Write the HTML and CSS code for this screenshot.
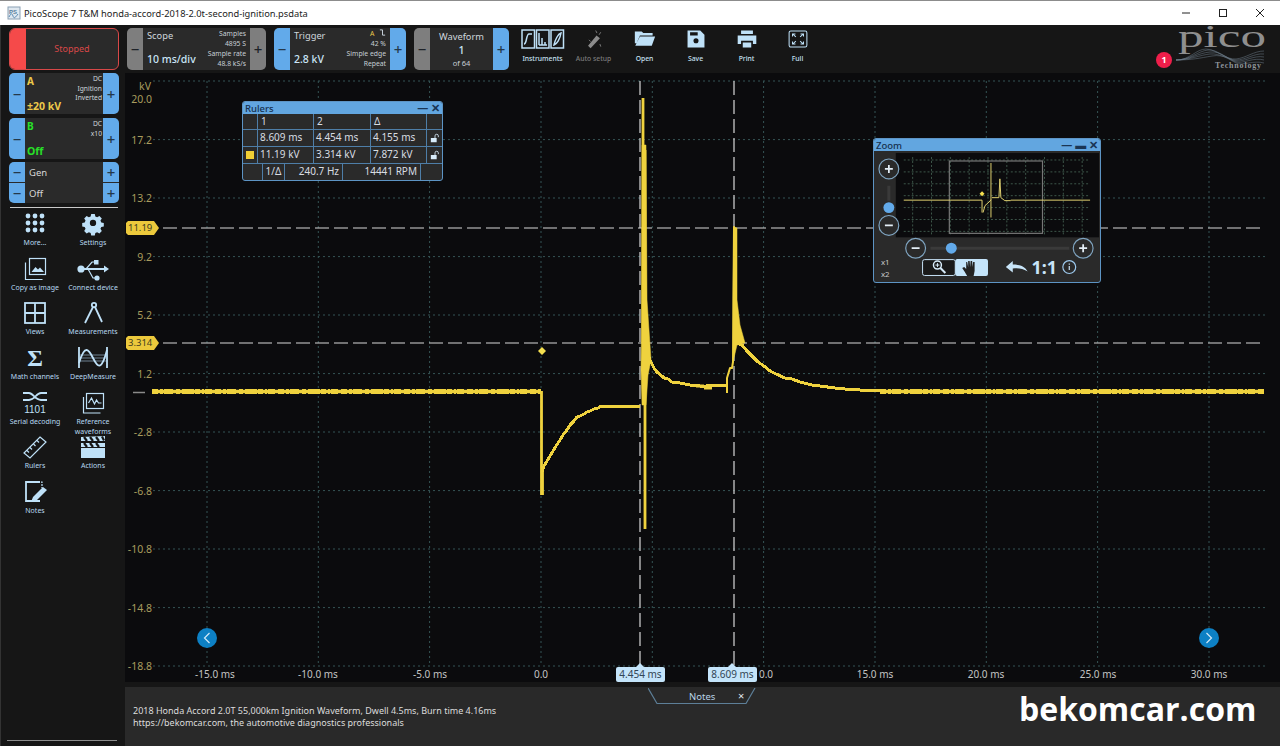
FILE: index.html
```html
<!DOCTYPE html>
<html lang="en">
<head>
<meta charset="utf-8">
<title>PicoScope 7 T&amp;M</title>
<link rel="stylesheet" href="styles.css">
</head>
<body>
<div class="app">
  <header class="titlebar">
    <svg class="app-icon" viewBox="0 0 14 14"><rect x="1" y="1" width="12" height="12" fill="#dfe8f0" stroke="#8aa0b4"/><text x="2" y="7.5" class="app-icon-text">PS</text><path d="M2 11c2-4 3-4 4-1s2 2 5-2" fill="none" stroke="#5a88b0"/></svg>
    <span class="title-text">PicoScope 7 T&amp;M honda-accord-2018-2.0t-second-ignition.psdata</span>
    <div class="win-buttons">
      <svg viewBox="0 0 10 10"><path d="M1 5h8" stroke="#222" fill="none"/></svg>
      <svg viewBox="0 0 10 10"><rect x="1.5" y="1.5" width="7" height="7" stroke="#222" fill="none"/></svg>
      <svg viewBox="0 0 10 10"><path d="M1 1l8 8M9 1l-8 8" stroke="#222" fill="none"/></svg>
    </div>
  </header>
  <div class="workspace">
    <aside class="sidebar">
      <div class="stopped"><span class="stopped-led"></span><span class="stopped-text">Stopped</span></div>
      <div class="channel">
        <button class="step blue">−</button>
        <div class="ch-body">
          <span class="ch-name yellow">A</span>
          <span class="ch-info">DC<br>Ignition<br>Inverted</span>
          <span class="ch-value yellow">±20 kV</span>
        </div>
        <button class="step blue">+</button>
      </div>
      <div class="channel">
        <button class="step blue">−</button>
        <div class="ch-body">
          <span class="ch-name green">B</span>
          <span class="ch-info">DC<br>x10</span>
          <span class="ch-value green">Off</span>
        </div>
        <button class="step blue">+</button>
      </div>
      <div class="gen">
        <div class="gen-row"><button class="step blue">−</button><span class="gen-label">Gen</span><button class="step blue">+</button></div>
        <div class="gen-row"><button class="step blue">−</button><span class="gen-label">Off</span><button class="step blue">+</button></div>
      </div>
      <div class="rule"></div>
      <div class="tools">
        <div class="tool"><svg viewBox="0 0 26 26"><g class="ifill"><circle cx="6" cy="5" r="2.4"/><circle cx="13" cy="5" r="2.4"/><circle cx="20" cy="5" r="2.4"/><circle cx="6" cy="12" r="2.4"/><circle cx="13" cy="12" r="2.4"/><circle cx="20" cy="12" r="2.4"/><circle cx="6" cy="19" r="2.4"/><circle cx="13" cy="19" r="2.4"/><circle cx="20" cy="19" r="2.4"/></g></svg><span>More...</span></div>
        <div class="tool"><svg viewBox="0 0 26 26"><path class="ifill" fill-rule="evenodd" d="M11 3h4l.6 2.8 2 .9 2.5-1.5 2.7 2.8-1.5 2.4.9 2.1 2.8.6v3.8l-2.8.6-.9 2.1 1.5 2.4-2.7 2.8-2.5-1.5-2 .9-.6 2.8h-4l-.6-2.8-2-.9-2.5 1.5-2.7-2.8 1.5-2.4-.9-2.1-2.8-.6v-3.8l2.8-.6.9-2.1-1.5-2.4 2.7-2.8 2.5 1.5 2-.9zM13 9.5a3.5 3.5 0 1 0 0 7 3.5 3.5 0 0 0 0-7z" transform="translate(1.3 .2) scale(.9)"/></svg><span>Settings</span></div>
        <div class="tool"><svg viewBox="0 0 26 26"><g class="istroke"><rect x="7.5" y="2.5" width="16" height="16"/><path d="M3.5 6.5v17h17"/></g><path class="ifill" d="M9.5 16l4-5 2.5 2.5 2-2 4 4.500z"/></svg><span>Copy as image</span></div>
        <div class="tool"><svg viewBox="0 0 34 26"><g class="ifill"><circle cx="5" cy="13" r="3.6"/><path d="M5 12h25v2H5z"/><path d="M28 9.500l5 3.500-5 3.500z"/><rect x="18" y="4" width="4.500" height="4.500"/><circle cx="21" cy="22" r="2.600"/></g><path class="istroke" d="M10 13l6-7h3M12 13l5 9h3"/></svg><span>Connect device</span></div>
        <div class="tool"><svg viewBox="0 0 26 26"><g class="istroke2"><rect x="3" y="3" width="20" height="20"/><path d="M13 3v20M3 13h20"/></g></svg><span>Views</span></div>
        <div class="tool"><svg viewBox="0 0 26 26"><g class="istroke2"><circle cx="14" cy="5" r="2.200"/><path d="M13 7L5 23M15 7l7 15"/></g></svg><span>Measurements</span></div>
        <div class="tool"><svg viewBox="0 0 26 26"><text x="13" y="21" class="sigma">Σ</text></svg><span>Math channels</span></div>
        <div class="tool"><svg viewBox="0 0 32 26"><path d="M3 10h26M3 13h26M3 16h26" stroke="#6d8090" fill="none"/><g class="istroke2"><path d="M2 2v21M30 2v21"/><path d="M2 18C8 -2 12 5 16 13s8 15 14-8"/></g></svg><span>DeepMeasure</span></div>
        <div class="tool"><svg viewBox="0 0 30 26"><path class="istroke2" d="M3 3h6c4 0 6 7 12 7h6M3 10h6c6 0 7-7 12-7h6"/><text x="15" y="23" class="bits">1101</text></svg><span>Serial decoding</span></div>
        <div class="tool"><svg viewBox="0 0 26 26"><g class="istroke"><rect x="6.500" y="3.500" width="17" height="15"/><path d="M3.500 7v16h17"/><path d="M8.500 13l3-5 3 6 2-4 2 3h3"/></g></svg><span>Reference<br>waveforms</span></div>
        <div class="tool"><svg viewBox="0 0 26 26"><g class="istroke"><path d="M18 3l6 5L8 24l-6-5z"/><path d="M15 6.500l2 2M11.500 10l2 2M8 13.500l2 2M5 16.500l2 2"/></g></svg><span>Rulers</span></div>
        <div class="tool"><svg viewBox="0 0 26 26"><path class="ifill" d="M1 9h24v15H1z"/><path class="ifill" d="M1 7V3l24-1v5z"/><path d="M4 3l3 4M10 3l3 4M16 3l3 4M22 2.500l2 4M4 9l3 4M10 9l3 4M16 9l3 4" stroke="#161616" stroke-width="2.200" fill="none"/><path d="M1 13.500h24" stroke="#161616"/></svg><span>Actions</span></div>
        <div class="tool"><svg viewBox="0 0 26 26"><path class="istroke2" d="M18 3H4v19h14"/><path class="istroke" d="M4 3h16v6" stroke-dasharray="2 1"/><path class="ifill" d="M9 23l2-5L21 8l4 3-10 10z"/></svg><span>Notes</span></div>
      </div>
      <div class="rule rule-end"></div>
    </aside>
    <div class="main">
      <div class="toolbar">
        <div class="group scope">
          <button class="step gray">−</button>
          <div class="g-body">
            <div class="g-left"><span class="g-title">Scope</span><span class="g-value">10 ms/div</span></div>
            <div class="g-info">Samples<br>4895 S<br>Sample rate<br>48.8 kS/s</div>
          </div>
          <button class="step gray">+</button>
        </div>
        <div class="group trigger">
          <button class="step blue">−</button>
          <div class="g-body">
            <div class="g-left"><span class="g-title">Trigger</span><span class="g-value">2.8 kV</span></div>
            <div class="g-info"><span class="yellow">A</span> <svg class="edge" viewBox="0 0 8 8"><path d="M1 1h3v6h3" fill="none" stroke="#d8e4ee"/></svg><br>42 %<br>Simple edge<br>Repeat</div>
          </div>
          <button class="step blue">+</button>
        </div>
        <div class="group waveform">
          <button class="step gray">−</button>
          <div class="g-body g-center"><span class="g-title">Waveform</span><span class="g-num">1</span><span class="g-of">of 64</span></div>
          <button class="step blue">+</button>
        </div>
        <div class="tbtn wide"><svg viewBox="0 0 44 22"><g class="istroke3"><rect x="1" y="2" width="12.500" height="18"/><rect x="15.500" y="2" width="12.500" height="18"/><rect x="30" y="2" width="12.500" height="18"/><path d="M3 16c3 0 2-10 5-10h3"/><path d="M18 5v12M21 10v7M24 14v3M18 17h8"/><path d="M33 17c1-5 4-11 7-12-1 6-4 11-7 12z"/></g></svg><span>Instruments</span></div>
        <div class="tbtn dim"><svg viewBox="0 0 26 26"><path d="M6 21L16 9l4 3L9 24z" fill="#8c8c8c"/><path d="M15 3l1.500 3M21 5l-2 3M7 14l2 2M20 19l1 3" stroke="#8c8c8c" fill="none"/></svg><span>Auto setup</span></div>
        <div class="tbtn"><svg viewBox="0 0 26 26"><path class="ifill" d="M1 4h8l2 2h11v3H7L3 18H1zM7 10h18l-4 11H1.500z"/></svg><span>Open</span></div>
        <div class="tbtn"><svg viewBox="0 0 26 26"><path class="ifill" fill-rule="evenodd" d="M3 3h15l5 5v15H3zM6 5v4h9V5zM13 12a3 3 0 1 0 0 6 3 3 0 0 0 0-6z"/></svg><span>Save</span></div>
        <div class="tbtn"><svg viewBox="0 0 26 26"><path class="ifill" fill-rule="evenodd" d="M6 3h14v4H6zM2 9h22v10h-4v-4H6v4H2zM8 17h10v6H8z"/></svg><span>Print</span></div>
        <div class="tbtn"><svg viewBox="0 0 26 26"><rect x="2.500" y="3.500" width="21" height="19" rx="2" class="istroke"/><path class="istroke" d="M6.500 7l4 3.500M19.500 7l-4 3.500M6.500 19l4-3.500M19.500 19l-4-3.500M6.500 10V7H10M19.500 10V7H16M6.500 16v3H10M19.500 16v3H16"/></svg><span>Full</span></div>
        <div class="logo">
          <svg viewBox="1150 28 122 44" class="logo-svg">
            <text x="1178" y="47" class="logo-pico" textLength="88" lengthAdjust="spacingAndGlyphs">pico</text>
            <g fill="none" stroke="#6f7f8c" stroke-width=".5">
              <path d="M1176 60c14 0 20-11 30-11s20 11 30 10 18-8 28-8"/>
              <path d="M1176 60c14 0 22-9 32-10s18 10 28 10 18-7 28-6"/>
              <path d="M1176 60c14 0 22-7 34-8s18 8 26 9 18-6 28-4"/>
              <path d="M1176 60c14 0 24-5 34-6s20 6 26 8 18-5 28-2"/>
              <path d="M1176 60c16 0 24-2 36-4s18 4 24 7 18-3 28 0"/>
            </g>
            <text x="1215" y="68" class="logo-tech" textLength="46">Technology</text>
          </svg>
          <span class="badge">1</span>
        </div>
      </div>
      <div class="stage">
        <svg class="plot" viewBox="125 73 1155 609">
          <g class="grid">
            <path d="M153 81H1265M153 139.600H1265M153 198H1265M153 256.600H1265M153 315H1265M153 373.600H1265M153 432H1265M153 490.600H1265M153 549H1265M153 607.600H1265M153 666H1265"/>
            <path d="M207 81V666M318.300 81V666M429.600 81V666M541 81V666M652.300 81V666M763.600 81V666M875 81V666M986.300 81V666M1097.600 81V666M1209 81V666"/>
          </g>
          <g class="ylab">
            <text x="151" y="90">kV</text><text x="152" y="103">20.0</text><text x="152" y="144">17.2</text><text x="152" y="202">13.2</text><text x="152" y="261">9.2</text><text x="152" y="319">5.2</text><text x="152" y="378">1.2</text><text x="152" y="436">-2.8</text><text x="152" y="495">-6.8</text><text x="152" y="553">-10.8</text><text x="152" y="612">-14.8</text><text x="152" y="670">-18.8</text>
          </g>
          <g class="xlab">
            <text x="215" y="678">-15.0 ms</text><text x="318" y="678">-10.0 ms</text><text x="430" y="678">-5.0 ms</text><text x="541" y="678">0.0</text><text x="766" y="678">0.0</text><text x="875" y="678">15.0 ms</text><text x="986" y="678">20.0 ms</text><text x="1098" y="678">25.0 ms</text><text x="1209" y="678">30.0 ms</text>
          </g>
          <g class="rulers">
            <path d="M640 81V666M734 81V666M163 228H1265M163 343H1265"/>
          </g>
          <path d="M133 392.500H145" stroke="#8a8a8a" stroke-width="1.500" fill="none"/>
          <g class="trace">
            <path class="base" d="M152 391.500H541M880 391.500H1264"/>
            <path class="noise" d="M152 389.500H541M880 389.500H1264"/>
            <path class="noise" d="M152 393.500H541M880 393.500H1264"/>
            <path class="thick" d="M541.500 391V495M542.500 495V466"/>
            <path class="stair" d="M542 472L544 466 547 461 550 456 553 451 556 446 560 440 563 435 567 430 570 425 574 421 577 417 580 416 584 414 587 412 590 411 594 409 598 408 601 406H636L640 407"/>
            <path class="thin" d="M643 98V343M645 150V529"/>
            <path class="mass" d="M641.500 330L642 145 646 145 647 300 650 345 651 360 648 375 646 405 642 405 641 370z"/>
            <path class="stair" d="M647 350L650 360 652 364 654 368 656 371 658 373 662 376 664 378 668 379 672 382 680 383 690 385 700 386 706 386 710 385H727"/>
            <path class="jit" d="M696 386H704M704 388H712"/>
            <path class="mid" d="M727 393V378L730 368 732 368 733 362 734 227 736 300"/>
            <path class="mass" d="M733 300L734 227 737 228 737 300 740 325 745 343 737 345 733 362z"/>
            <path class="stair" d="M737 343L742 345 747 351 752 356 758 362 764 366 770 371 776 374 785 378 792 379 800 382 812 385 820 386 835 388 850 389.500 880 391"/>
          </g>
          <path d="M542 347l4 4-4 4-4-4z" fill="#f5e050"/>
          <g>
            <circle cx="207" cy="638" r="10" fill="#0d80c4"/><path d="M209.500 633l-5 5 5 5" stroke="#d0e8f8" stroke-width="1.200" fill="none"/>
            <circle cx="1209" cy="638" r="10" fill="#0d80c4"/><path d="M1206.500 633l5 5-5 5" stroke="#d0e8f8" stroke-width="1.200" fill="none"/>
          </g>
        </svg>
        <span class="pent pent-a">11.19</span>
        <span class="pent pent-b">3.314</span>
        <span class="tlabel tlabel-a">4.454 ms</span>
        <span class="tlabel tlabel-b">8.609 ms</span>

        <section class="float rulers-win">
          <div class="float-title"><span>Rulers</span><span class="float-ctl">—&nbsp;✕</span></div>
          <div class="r-row r-head"><i></i><b>1</b><b>2</b><b>Δ</b><i></i></div>
          <div class="r-row"><i></i><b>8.609 ms</b><b>4.454 ms</b><b>4.155 ms</b><i class="lock"><svg viewBox="0 0 12 12"><path d="M1 6h7v5H1z" fill="#d8ecfa"/><path d="M6 6V3.500a2 2 0 0 1 4 0V5" fill="none" stroke="#d8ecfa"/></svg></i></div>
          <div class="r-row"><i class="swatch-cell"><em class="swatch"></em></i><b>11.19 kV</b><b>3.314 kV</b><b>7.872 kV</b><i class="lock"><svg viewBox="0 0 12 12"><path d="M1 6h7v5H1z" fill="#d8ecfa"/><path d="M6 6V3.500a2 2 0 0 1 4 0V5" fill="none" stroke="#d8ecfa"/></svg></i></div>
          <div class="r-foot"><b class="f1">1/Δ</b><b class="f2">240.7 Hz</b><b class="f3">14441 RPM</b></div>
        </section>

        <section class="float zoom-win">
          <div class="float-title"><span>Zoom</span><span class="float-ctl">— ▬ ✕</span></div>
          <svg class="zoom-body" viewBox="873 150 228 132">
            <rect x="895" y="152" width="205" height="85" fill="#0b0b0d"/>
            <g class="zgrid">
              <path d="M903 159H1091M903 171H1091M903 183H1091M903 195H1091M903 207H1091M903 219H1091M903 231H1091"/>
              <path d="M912 156V234M931 156V234M950 156V234M969 156V234M988 156V234M1007 156V234M1026 156V234M1045 156V234M1064 156V234M1083 156V234"/>
            </g>
            <rect x="949" y="160" width="94" height="73" fill="none" stroke="#777" stroke-width="1.200"/>
            <path d="M903 199.500H982V212M983 212L985 205 990 200.500 991 199M991 162V217M992 197H999L1000 178 1001 197 1005 200H1011M1011 199.500H1091" fill="none" stroke="#e0d070" stroke-width="1"/>
            <path d="M982 190.500l2.500 2.500-2.500 2.500-2.500-2.500z" fill="#f5e050"/>
            <path d="M888 185V200" stroke="#3a3a3a" stroke-width="3"/>
            <path d="M930 248H1070" stroke="#3a3a3a" stroke-width="3"/>
            <g class="zcirc">
              <circle cx="888" cy="168" r="10"/><circle cx="888" cy="225" r="10"/><circle cx="915" cy="248" r="10"/><circle cx="1084" cy="248" r="10"/>
            </g>
            <g class="zsign">
              <path d="M884 168h8M888 164v8M884 225h8M911 248h8M1080 248h8M1084 244v8"/>
            </g>
            <circle cx="888" cy="207" r="5.500" fill="#62aaea"/>
            <circle cx="951" cy="248" r="5.500" fill="#62aaea"/>
            <text x="880" y="265" class="zsmall">x1</text>
            <text x="880" y="277" class="zsmall">x2</text>
            <rect x="922" y="259.500" width="33" height="16" rx="2" fill="#1a1a1a" stroke="#c8e4f8"/>
            <rect x="955" y="259" width="33" height="17" rx="2" fill="#c4e4fa"/>
            <circle cx="937" cy="265" r="4" fill="none" stroke="#d8ecfa" stroke-width="1.500"/>
            <path d="M935 265h4M937 263v4" stroke="#d8ecfa"/>
            <path d="M940 268l5 5" stroke="#d8ecfa" stroke-width="2"/>
            <path d="M967 276l-3-5-2-3 2-1 2 2v-7h1l1 5v-6h1.500l.5 6 .5-6h1.500l.5 6 .5-5h1.500v9l-1 5z" fill="#222"/>
            <path d="M1006 267l7-6v3.500c6 0 12 1 15 7-5-3-9-3.500-15-3v4z" fill="#c8e4f8"/>
            <text x="1032" y="274" class="z11">1:1</text>
            <circle cx="1070" cy="267" r="6.500" fill="none" stroke="#9cc8ec" stroke-width="1.200"/>
            <path d="M1070 266v4M1070 263.500v1.200" stroke="#c8e4f8" stroke-width="1.200"/>
          </svg>
        </section>
      </div>
      <div class="notes">
        <p class="notes-text">2018 Honda Accord 2.0T 55,000km Ignition Waveform, Dwell 4.5ms, Burn time 4.16ms<br>https://bekomcar.com, the automotive diagnostics professionals</p>
        <div class="notes-tab"><svg viewBox="0 0 108 17"><path d="M0 0l9 15.500h89L107 0" fill="none" stroke="#5d7f98" stroke-width="1.200"/></svg><span class="tab-label">Notes</span><span class="tab-x">×</span></div>
        <div class="watermark">bekomcar.com</div>
      </div>
    </div>
  </div>
</div>
</body>
</html>
```
FILE: styles.css
```css
* { box-sizing: border-box; }
html, body { margin: 0; padding: 0; height: 100%; background: #161616; }
body { font-family: "Noto Sans", "Open Sans", sans-serif; overflow: hidden; }
button { font-family: inherit; border: 0; padding: 0; margin: 0; }

.app { width: 1280px; height: 746px; display: flex; flex-direction: column; }

.titlebar { height: 25px; flex: none; background: #fff; border-top: 1px solid #8c8c8c; display: flex; align-items: center; color: #222; }
.app-icon { width: 14px; height: 14px; margin-left: 7px; }
.app-icon-text { font: 700 6px "Liberation Sans", sans-serif; fill: #5a7f9e; }
.title-text { font-size: 9.300px; margin-left: 3px; white-space: nowrap; }
.win-buttons { margin-left: auto; display: flex; gap: 27px; margin-right: 15px; }
.win-buttons svg { width: 10px; height: 10px; }

.workspace { flex: 1; display: flex; min-height: 0; }

.sidebar { width: 125px; flex: none; background: #161616; padding: 3px 6px 0 8px; display: flex; flex-direction: column; border-left: 1px solid #333; }
.stopped { height: 42px; border: 1px solid #d84848; border-radius: 6px; display: flex; overflow: hidden; background: #2a2a2a; }
.stopped-led { width: 16px; background: #f54a4a; }
.stopped-text { flex: 1; text-align: center; color: #d84848; font-size: 9px; line-height: 40px; }

.step { width: 16px; flex: none; font-size: 15px; font-weight: 500; color: #24384a; display: flex; align-items: center; justify-content: center; }
.blue { background: #62aaea; }
.gray { background: #7e7e7e; color: #1d2228; }
.yellow { color: #ecc94a; }
.green { color: #28e028; }

.channel { height: 41px; margin-top: 3px; display: flex; border-radius: 5px; overflow: hidden; background: #2a2a2a; }
.channel + .channel { margin-top: 4px; }
.ch-body { flex: 1; display: grid; grid-template-columns: 1fr auto; grid-template-rows: 1fr 15px; padding: 1px 1px 0 2px; min-width: 0; }
.ch-name { font-size: 10px; font-weight: 700; line-height: 14px; }
.ch-info { grid-column: 2; grid-row: 1 / 3; font-size: 6.700px; line-height: 9.500px; color: #cfd6dc; text-align: right; }
.ch-value { grid-column: 1; grid-row: 2; font-size: 10.500px; font-weight: 700; line-height: 15px; white-space: nowrap; }

.gen { margin-top: 3px; border-radius: 5px; overflow: hidden; background: #2a2a2a; display: flex; flex-direction: column; gap: 1px; }
.gen-row { height: 20px; display: flex; }
.gen-label { flex: 1; font-size: 9.500px; color: #d8d8d8; line-height: 21px; padding-left: 4px; }

.rule { height: 1px; background: #c9c9c9; margin: 4px 1px 0 1px; flex: none; }
.rule-end { margin: auto 2px 5px -2px; background: #8d8d8d; }

.tools { margin: 3px 0 0 -3px; display: grid; grid-template-columns: 58px 58px; grid-auto-rows: 44.700px; }
.tool { display: flex; flex-direction: column; align-items: center; }
.tool svg { height: 26px; width: auto; flex: none; }
.tool span { font-size: 7px; line-height: 10px; color: #b6d8f0; text-align: center; white-space: nowrap; margin-top: 1px; }

.ifill { fill: #bfe1f8; }
.istroke { fill: none; stroke: #bfe1f8; stroke-width: 1.200; }
.istroke2 { fill: none; stroke: #bfe1f8; stroke-width: 1.800; }
.istroke3 { fill: none; stroke: #bfe1f8; stroke-width: 1.500; }
.sigma { font: 700 24px "Liberation Serif", serif; fill: #bfe1f8; text-anchor: middle; }
.bits { font: 400 10px "Liberation Sans", sans-serif; fill: #bfe1f8; text-anchor: middle; }

.main { flex: 1; display: flex; flex-direction: column; min-width: 0; }

.toolbar { height: 48px; flex: none; background: #161616; display: flex; padding: 3px 0 0 2px; align-items: flex-start; }
.group { height: 42px; display: flex; border-radius: 5px; overflow: hidden; background: #2a2a2a; margin-right: 8px; flex: none; }
.scope { width: 139px; }
.trigger { width: 132px; }
.waveform { width: 95px; }
.g-body { flex: 1; display: flex; justify-content: space-between; padding: 0 4px; min-width: 0; }
.g-left { display: flex; flex-direction: column; justify-content: space-between; padding: 1px 0 3px; }
.g-title { font-size: 9.300px; line-height: 14px; color: #cfd6dc; }
.g-value { font-size: 10.500px; font-weight: 500; line-height: 16px; color: #cbe6f8; white-space: nowrap; }
.g-info { font-size: 6.800px; line-height: 10px; text-align: right; color: #c7cfd6; white-space: nowrap; padding-top: 1px; }
.edge { width: 7px; height: 7px; margin-left: 3px; }
.g-center { flex-direction: column; align-items: center; justify-content: flex-start; padding-top: 2px; }
.g-num { font-size: 10.500px; font-weight: 500; line-height: 13px; color: #cbe6f8; }
.g-of { font-size: 7.500px; line-height: 10px; color: #c7cfd6; margin-top: 1px; }

.tbtn { width: 51px; height: 42px; display: flex; flex-direction: column; align-items: center; flex: none; }
.tbtn svg { height: 22px; width: auto; }
.tbtn span { font-size: 6.800px; line-height: 10px; color: #c6e0f2; margin-top: 4px; white-space: nowrap; font-weight: 500; }
.tbtn.dim span { color: #7a7a7a; }

.logo { margin-left: auto; position: relative; width: 122px; height: 44px; margin-right: 8px; }
.logo-svg { width: 122px; height: 44px; display: block; overflow: visible; }
.logo-pico { font: 400 32px "Liberation Serif", serif; fill: #8f8f8f; }
.logo-tech { font: 700 8px "Liberation Serif", serif; fill: #8e959b; }
.badge { position: absolute; left: 6px; top: 24px; width: 16px; height: 16px; border-radius: 50%; background: #ee1e4a; color: #fff; font-size: 9px; font-weight: 700; line-height: 16px; text-align: center; }

.stage { height: 609px; flex: none; background: #0b0b0d; position: relative; }
.plot { display: block; width: 1155px; height: 609px; }
.grid path { fill: none; stroke: #355456; stroke-width: 1; stroke-dasharray: 2 3; }
.ylab text { font-size: 10.500px; fill: #a89c5e; text-anchor: end; }
.xlab text { font-size: 10px; fill: #c4c4c4; text-anchor: middle; }
.rulers path { fill: none; stroke: #d8d8d8; stroke-width: 1.200; stroke-dasharray: 14 5; }
.trace path { fill: none; stroke: #efd23e; stroke-width: 2.200; stroke-linejoin: round; }
.trace .base { stroke-width: 3.600; }
.trace .noise { stroke-width: 1; stroke-dasharray: 6 2 3 1 9 3 4 2 12 1 5 2 2 1 7 3; }
.trace .thin { stroke-width: 2.800; }
.trace .thick { stroke-width: 2.800; }
.trace .stair { stroke-width: 3; shape-rendering: crispEdges; }
.trace .mid { stroke-width: 2; }
.trace .jit { stroke-width: 3; }
.trace .mass { fill: #efd23e; stroke-width: .5; }

.pent { position: absolute; left: 1px; width: 33px; height: 14px; background: #ecc93c; color: #3c3a20; font-size: 9.500px; line-height: 14px; padding-left: 2px; clip-path: polygon(2px 0, 28px 0, 33px 7px, 28px 14px, 2px 14px, 0 12px, 0 2px); }
.pent-a { top: 148px; }
.pent-b { top: 263px; }

.tlabel { position: absolute; top: 594px; width: 49px; height: 15px; background: #c4e4fa; color: #334656; font-size: 10px; line-height: 15px; text-align: center; border-radius: 2px; }
.tlabel::before { content: ""; position: absolute; left: 20px; top: -4px; border-left: 4px solid transparent; border-right: 4px solid transparent; border-bottom: 4px solid #c4e4fa; }
.tlabel-a { left: 491px; }
.tlabel-b { left: 583px; }

.float { position: absolute; background: #2a2a2a; border: 1px solid #5d94c4; border-radius: 3px; overflow: hidden; }
.float-title { height: 12px; background: #62a6e0; color: #16304e; font-size: 9.500px; font-weight: 500; line-height: 13px; padding: 0 2px; display: flex; justify-content: space-between; white-space: nowrap; }
.float-ctl { font-size: 11px; line-height: 12px; color: #1a3554; font-weight: 700; }

.rulers-win { left: 117px; top: 28px; width: 201px; height: 80px; }
.r-row { display: grid; grid-template-columns: 15px 56px 57px 56px 15px; height: 17px; border-top: 1px solid #4e7ea8; }
.r-head { height: 15px; border-top: 0; }
.r-row > * { border-right: 1px solid #4e7ea8; font-style: normal; font-weight: 400; font-size: 10px; line-height: 15px; color: #d8dde2; padding-left: 2px; overflow: hidden; white-space: nowrap; }
.r-row > *:last-child { border-right: 0; }
.r-head b { font-size: 10px; padding-left: 3px; }
.lock { display: flex; align-items: center; justify-content: center; padding: 0 !important; }
.lock svg { width: 10px; height: 10px; }
.swatch-cell { display: flex; align-items: center; justify-content: center; padding: 0 !important; }
.swatch { width: 8px; height: 8px; background: #f0cf35; display: block; }
.r-foot { display: flex; height: 17px; border-top: 1px solid #4e7ea8; padding-left: 20px; }
.r-foot b { font-weight: 400; font-size: 10px; line-height: 15px; color: #d8dde2; border-left: 1px solid #4e7ea8; border-right: 1px solid #4e7ea8; text-align: right; padding-right: 3px; margin-left: -1px; }
.r-foot .f1 { width: 23px; text-align: center; padding: 0; }
.r-foot .f2 { width: 59px; }
.r-foot .f3 { width: 79px; }

.zoom-win { left: 748px; top: 65px; width: 228px; height: 145px; }
.zoom-body { display: block; width: 226px; height: 131px; }
.zgrid path { fill: none; stroke: #4a6a5a; stroke-width: .8; stroke-dasharray: 2 2; }
.zcirc circle { fill: #2a2a2a; stroke: #7fa4c0; stroke-width: 1.200; }
.zsign path { fill: none; stroke: #e4eef6; stroke-width: 1.800; }
.zsmall { font-size: 8px; fill: #c8c8c8; }
.z11 { font-size: 18px; font-weight: 700; fill: #c8e4f8; }

.notes { flex: 1; margin-top: 5px; background: #292929; position: relative; padding: 18px 0 0 8px; }
.notes-text { margin: 0; font-size: 9px; line-height: 12px; color: #dcdcdc; white-space: nowrap; }
.notes-tab { position: absolute; left: 523px; top: 1px; width: 108px; height: 17px; }
.notes-tab svg { position: absolute; left: 0; top: 0; width: 108px; height: 17px; }
.tab-label { position: absolute; left: 41px; top: 2px; font-size: 9.500px; line-height: 13px; color: #b8d2e6; }
.tab-x { position: absolute; left: 90px; top: 1px; font-size: 11px; line-height: 13px; color: #e0e8ee; }
.watermark { position: absolute; left: 894px; top: 0; font: 700 32px "Open Sans", sans-serif; color: #fff; white-space: nowrap; }
```
